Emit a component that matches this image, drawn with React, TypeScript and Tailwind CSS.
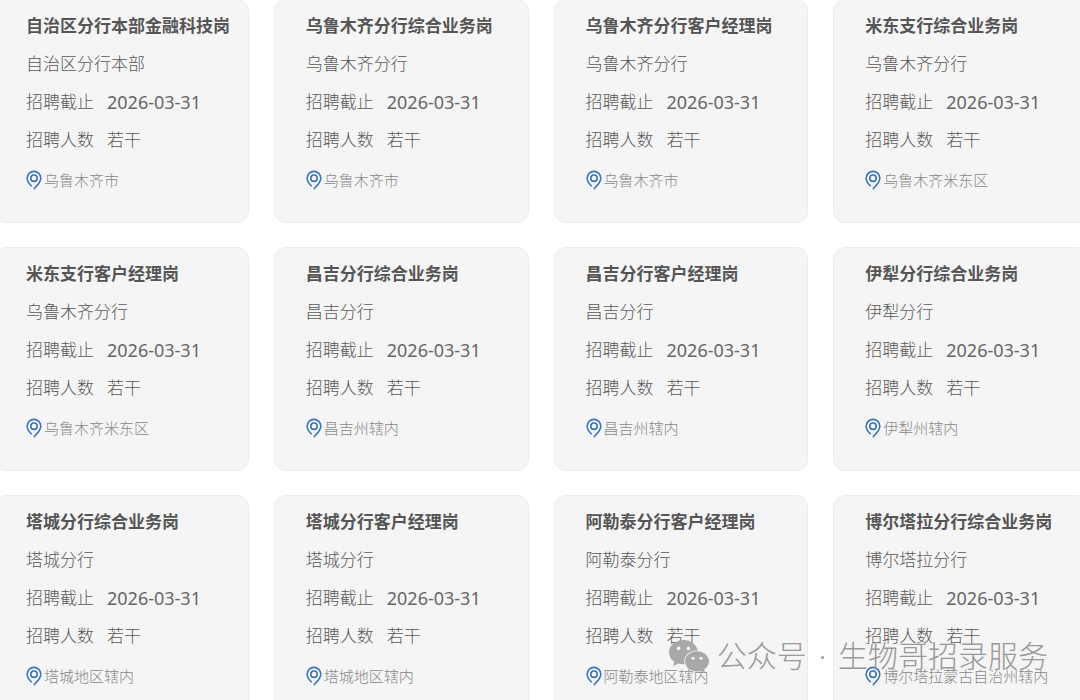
interface Job {
  title: string;
  branch: string;
  city: string;
}

const DEADLINE = '2026-03-31';
const HEADCOUNT = '若干';

const jobs: Job[] = [
  { title: '自治区分行本部金融科技岗', branch: '自治区分行本部', city: '乌鲁木齐市' },
  { title: '乌鲁木齐分行综合业务岗', branch: '乌鲁木齐分行', city: '乌鲁木齐市' },
  { title: '乌鲁木齐分行客户经理岗', branch: '乌鲁木齐分行', city: '乌鲁木齐市' },
  { title: '米东支行综合业务岗', branch: '乌鲁木齐分行', city: '乌鲁木齐米东区' },
  { title: '米东支行客户经理岗', branch: '乌鲁木齐分行', city: '乌鲁木齐米东区' },
  { title: '昌吉分行综合业务岗', branch: '昌吉分行', city: '昌吉州辖内' },
  { title: '昌吉分行客户经理岗', branch: '昌吉分行', city: '昌吉州辖内' },
  { title: '伊犁分行综合业务岗', branch: '伊犁分行', city: '伊犁州辖内' },
  { title: '塔城分行综合业务岗', branch: '塔城分行', city: '塔城地区辖内' },
  { title: '塔城分行客户经理岗', branch: '塔城分行', city: '塔城地区辖内' },
  { title: '阿勒泰分行客户经理岗', branch: '阿勒泰分行', city: '阿勒泰地区辖内' },
  { title: '博尔塔拉分行综合业务岗', branch: '博尔塔拉分行', city: '博尔塔拉蒙古自治州辖内' },
];

function PinIcon() {
  return (
    <svg className="h-5 w-4 shrink-0" viewBox="0 0 16 20" fill="none" stroke="#3a74bd" strokeWidth={1.6} strokeLinecap="round" aria-hidden="true">
      <path d="M5.200 15.800C2.800 13.400 1.200 11 1.200 8.200a6.800 6.800 0 0 1 13.600 0c0 4-3.200 6.900-6.500 10.400" />
      <circle cx="8" cy="8.200" r="3.200" />
    </svg>
  );
}

function WechatIcon() {
  return (
    <svg className="h-8 w-10 shrink-0" viewBox="0 0 40 32" aria-hidden="true">
      <path
        fill="#a8a8a8"
        d="M14.500 0C6.500 0 0 5.400 0 12.200c0 3.900 2.100 7.300 5.400 9.500L4 26l5-2.600c1.700.5 3.600.8 5.500.8h1.200a10 10 0 0 1-.5-3c0-6 5.700-10.700 12.600-10.700h1C27.500 4.500 21.500 0 14.500 0Z"
      />
      <path
        fill="#a8a8a8"
        d="M28 11.200c-6.600 0-12 4.500-12 10.100s5.400 10.100 12 10.100c1.500 0 2.900-.2 4.200-.6l4 2.100-1.100-3.500c3-1.800 4.900-4.800 4.900-8.100 0-5.600-5.400-10.100-12-10.100Z"
      />
      <g fill="#f5f5f5">
        <circle cx="9.600" cy="8.400" r="1.800" />
        <circle cx="19.400" cy="8.400" r="1.800" />
        <circle cx="24" cy="18.300" r="1.500" />
        <circle cx="32" cy="18.300" r="1.500" />
      </g>
    </svg>
  );
}

function JobCard({ job }: { job: Job }) {
  return (
    <li className="rounded-xl border border-[#ebebeb] bg-[#f5f5f5] pt-[7px] pb-[21px] pl-[31px] text-[17px] leading-[38px] whitespace-nowrap text-[#595959]">
      <h2 className="font-bold text-[#555]">{job.title}</h2>
      <p>{job.branch}</p>
      <dl>
        <div className="flex gap-[13px]">
          <dt>招聘截止</dt>
          <dd className="text-lg leading-[38px] font-normal text-[#666]">{DEADLINE}</dd>
        </div>
        <div className="flex gap-[13px]">
          <dt>招聘人数</dt>
          <dd>{HEADCOUNT}</dd>
        </div>
      </dl>
      <p className="flex items-center gap-0.5 text-[15px] leading-[42px] text-[#888]">
        <PinIcon />
        {job.city}
      </p>
    </li>
  );
}

export default function App() {
  return (
    <main className="relative h-screen overflow-hidden bg-white font-['Noto_Sans','Noto_Sans_CJK_SC',sans-serif] font-light">
      <ul className="-mt-px -mr-2 -ml-1.5 grid grid-cols-4 gap-x-[25px] gap-y-6">
        {jobs.map((job) => (
          <JobCard key={job.title} job={job} />
        ))}
      </ul>

      {/* Filigrane du compte, par-dessus la grille */}
      <div className="absolute right-8 bottom-6 flex items-center gap-2 text-[30px] leading-10 whitespace-nowrap text-[#999]">
        <WechatIcon />
        <p className="flex gap-3">
          <span>公众号</span>
          <span>·</span>
          <span>生物哥招录服务</span>
        </p>
      </div>
    </main>
  );
}
